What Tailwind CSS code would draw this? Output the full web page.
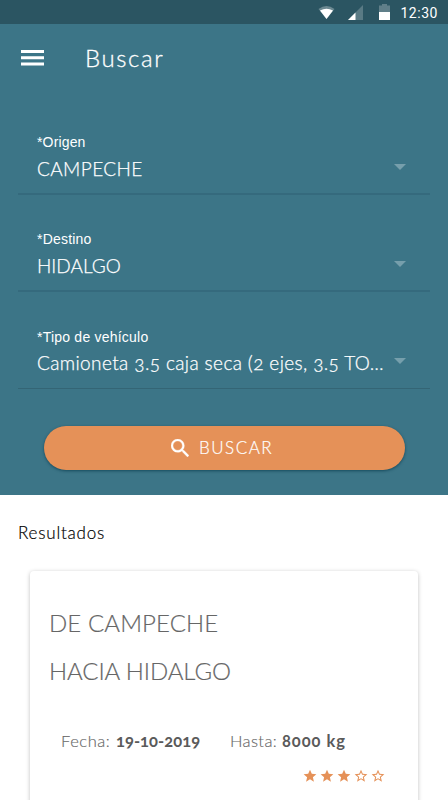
<!DOCTYPE html>
<html lang="es">
<head>
<meta charset="utf-8">
<title>Buscar</title>
<script src="https://cdn.jsdelivr.net/npm/@tailwindcss/browser@4"></script>
</head>
<body class="w-[448px] h-[800px] overflow-hidden bg-white font-['Lato',sans-serif] font-normal oldstyle-nums">
<svg class="hidden">
  <symbol id="star" viewBox="1 1 22 22"><path d="M12 17.27 18.18 21l-1.64-7.03L22 9.24l-7.19-.61L12 2 9.19 8.63 2 9.24l5.46 4.73L5.82 21z"/></symbol>
  <symbol id="star-line" viewBox="1 1 22 22"><path d="M22 9.24l-7.19-.62L12 2 9.19 8.63 2 9.24l5.46 4.73L5.82 21 12 17.27 18.18 21l-1.63-7.03L22 9.24zM12 15.4l-3.76 2.27 1-4.28-3.32-2.88 4.38-.38L12 6.1l1.71 4.04 4.38.38-3.32 2.88 1 4.28L12 15.4z"/></symbol>
</svg>
<div class="h-6 bg-[#2b5562] flex items-center justify-end pr-[10px] text-white">
  <svg class="w-[17px] h-[15px] mr-[13px]" viewBox="0 0 17 15"><path fill="#fff" fill-opacity=".3" d="M.5 4Q8.500-2 16.500 4L8.500 14z"/><path fill="#fff" d="M2 5.500Q8.500 1.800 15 5.500L8.500 14z"/></svg>
  <svg class="w-[15px] h-[15px] mr-4" viewBox="0 0 15 15"><path fill="#fff" fill-opacity=".22" d="M15 0v15H0z"/><path fill="#fff" d="M7.500 7.500V15H0z"/></svg>
  <svg class="w-[11px] h-4 mr-[10px]" viewBox="0 0 11 16"><path fill="#fff" fill-opacity=".25" d="M3 0h5v1.500h3V8H0V1.500h3z"/><path fill="#fff" d="M0 8h11v8H0z"/></svg>
  <span class="font-['Roboto',sans-serif] text-[14px] leading-6 tracking-[.55px] lining-nums pt-[2px]">12:30</span>
</div>
<section class="h-[471px] bg-[#3c7587] text-white">
  <header class="h-[68px] flex items-center pl-[21px]">
    <svg class="w-[23px] h-4" viewBox="0 0 23 16" fill="#fff"><path d="M0 0h23v3H0zM0 6.200h23v3H0zM0 12.400h23v3H0z"/></svg>
    <h1 class="ml-[41px] text-[24px] leading-8 font-light tracking-[1.600px] [-webkit-text-stroke:0.3px]">Buscar</h1>
  </header>
  <div class="pl-[18px] pr-[18px] pt-[5.400px]">
    <div class="h-[97.300px] pl-[19px] pr-6 border-b-2 border-[#356a7d] flex items-end justify-between pb-[12px]">
      <div>
        <div class="font-['Liberation_Sans',sans-serif] text-[14px] leading-5 tracking-[.15px]">*Origen</div>
        <div class="text-[19px] leading-6 mt-[5px] font-light tracking-[.4px] [-webkit-text-stroke:0.25px]">CAMPECHE</div>
      </div>
      <svg class="w-3 h-[6px] mb-[11px]" viewBox="0 0 12 6"><path fill="#769fac" d="M0 0h12L6 6z"/></svg>
    </div>
    <div class="h-[97.300px] pl-[19px] pr-6 border-b-2 border-[#356a7d] flex items-end justify-between pb-[12px]">
      <div>
        <div class="font-['Liberation_Sans',sans-serif] text-[14px] leading-5 tracking-[.2px]">*Destino</div>
        <div class="text-[19px] leading-6 mt-[5px] font-light [-webkit-text-stroke:0.25px]">HIDALGO</div>
      </div>
      <svg class="w-3 h-[6px] mb-[11px]" viewBox="0 0 12 6"><path fill="#769fac" d="M0 0h12L6 6z"/></svg>
    </div>
    <div class="h-[97.300px] pl-[19px] pr-6 border-b border-[#346575] flex items-end justify-between pb-[13px]">
      <div>
        <div class="font-['Liberation_Sans',sans-serif] text-[14px] leading-5 tracking-[.22px]">*Tipo de vehículo</div>
        <div class="text-[19px] leading-6 mt-[4px] font-light tracking-[.39px] whitespace-nowrap [-webkit-text-stroke:0.25px]">Camioneta 3.5 caja seca (2 ejes, 3.5 TO…</div>
      </div>
      <svg class="w-3 h-[6px] mb-[11px]" viewBox="0 0 12 6"><path fill="#769fac" d="M0 0h12L6 6z"/></svg>
    </div>
  </div>
  <button class="mt-[37.200px] ml-11 w-[361px] h-[43.500px] rounded-full bg-[#e59158] flex items-center pl-[127px] shadow-[0_1px_3px_rgba(0,50,70,.65)]">
    <svg class="w-[18px] h-[18px]" viewBox="3 3 17.500 17.500" fill="#fff" stroke="#fff" stroke-width=".3"><path d="M15.500 14h-.79l-.28-.27A6.471 6.471 0 0 0 16 9.500 6.500 6.500 0 1 0 9.500 16c1.610 0 3.090-.59 4.230-1.570l.27.28v.79l5 4.990L20.490 19l-4.990-5zm-6 0C7.010 14 5 11.990 5 9.500S7.010 5 9.500 5 14 7.010 14 9.500 11.990 14 9.500 14z"/></svg>
    <span class="ml-[10px] text-[17px] leading-6 font-light tracking-[1.500px] [-webkit-text-stroke:0.2px]">BUSCAR</span>
  </button>
</section>
<main>
  <h2 class="pl-[18px] pt-[26px] text-[17px] leading-6 font-light tracking-[.8px] text-black [-webkit-text-stroke:0.2px]">Resultados</h2>
  <article class="ml-[30px] mt-[26px] w-[388px] h-[260px] rounded-[4px] bg-white shadow-[0_1px_4px_rgba(0,0,0,.25)] text-[#666] font-light">
    <div class="pl-[19px] pt-[36px] text-[24px] leading-[32px] tracking-[.1px] [-webkit-text-stroke:0.2px]">DE CAMPECHE</div>
    <div class="pl-[19px] pt-[16px] text-[24px] leading-[32px] tracking-[-.1px] [-webkit-text-stroke:0.2px]">HACIA HIDALGO</div>
    <div class="flex pl-[31px] pt-[42px] text-[16.500px] leading-6">
      <div class="w-[169px] whitespace-nowrap"><span class="inline-block w-[55px] tracking-[.55px] [-webkit-text-stroke:0.15px]">Fecha:</span><b class="font-bold text-[#5a5a5a] tracking-[.05px]">19-10-2019</b></div>
      <div class="whitespace-nowrap"><span class="inline-block w-[52px] tracking-[.4px] [-webkit-text-stroke:0.15px]">Hasta:</span><b class="font-bold text-[#5a5a5a] tracking-[.95px]">8000 kg</b></div>
    </div>
    <div class="flex justify-end gap-[3px] pr-[33px] pt-[16px] text-[#e59158] fill-current">
      <svg class="w-[14px] h-[14px]"><use href="#star"/></svg>
      <svg class="w-[14px] h-[14px]"><use href="#star"/></svg>
      <svg class="w-[14px] h-[14px]"><use href="#star"/></svg>
      <svg class="w-[14px] h-[14px]"><use href="#star-line"/></svg>
      <svg class="w-[14px] h-[14px]"><use href="#star-line"/></svg>
    </div>
  </article>
</main>
</body>
</html>
